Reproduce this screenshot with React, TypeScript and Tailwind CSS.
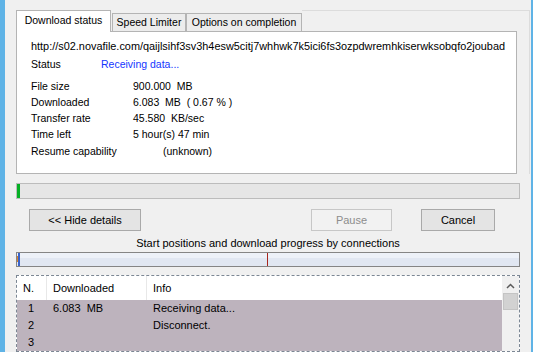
const url =
  'http://s02.novafile.com/qaijlsihf3sv3h4esw5citj7whhwk7k5ici6fs3ozpdwremhkiserwksobqfo2joubad'

const rows = [
  { n: '1', dl: '6.083  MB', info: 'Receiving data...' },
  { n: '2', dl: '', info: 'Disconnect.' },
  { n: '3', dl: '', info: '' },
]

function Btn({ label, w, disabled }: { label: string; w: string; disabled?: boolean }) {
  return (
    <div
      className={`${w} h-[22px] flex items-center justify-center border ${
        disabled ? 'border-[#c7c7c7] bg-[#f2f2f2] text-[#8d8d8d]' : 'border-[#a9a9a9] bg-[#e4e4e4]'
      }`}
    >
      {label}
    </div>
  )
}

export default function App() {
  return (
    <div className="flex w-[533px] h-[352px] overflow-hidden bg-[#f0f0f0] font-['Liberation_Sans',Arial,sans-serif] text-[10.5px] text-black">
      <div className="w-[5px] shrink-0 bg-[#5fb3e6]" />
      <div className="flex-1 pl-[11px] flex flex-col">
        {/* tab control */}
        <div className="mt-[10px] w-[514px] border-r border-[#dcdcdc]">
          <div className="flex h-[21px] items-end">
            <div className="relative z-10 -mb-px h-[22px] w-[95px] bg-white border border-b-0 border-[#b4b4b4] flex items-center justify-center pb-[1px]">
              Download status
            </div>
            <div className="h-[18px] w-[74px] border border-b-0 border-[#b4b4b4] bg-[#ececec] flex items-center justify-center ml-[1px]">
              Speed Limiter
            </div>
            <div className="h-[18px] w-[116px] border border-b-0 border-[#b4b4b4] bg-[#ececec] flex items-center justify-center">
              Options on completion
            </div>
            <div className="flex-1 self-stretch border-t border-[#dcdcdc]" />
          </div>
          <div className="w-[501px] h-[143px] bg-white border border-[#b4b4b4] pl-[14px]">
            <div className="mt-[6px] h-[16px] leading-[16px] w-[479px] overflow-hidden whitespace-nowrap text-[10.9px]">{url}</div>
            <div className="mt-[2px] flex h-[16px] leading-[16px]">
              <span className="w-[70px]">Status</span>
              <span className="text-[#1436ff]">Receiving data...</span>
            </div>
            <div className="mt-[6px] flex h-[16px] leading-[16px]">
              <span className="w-[102px]">File size</span>
              <span className="whitespace-pre">900.000  MB</span>
            </div>
            <div className="flex h-[16px] leading-[16px]">
              <span className="w-[102px]">Downloaded</span>
              <span className="whitespace-pre">6.083  MB  ( 0.67 % )</span>
            </div>
            <div className="flex h-[16px] leading-[16px]">
              <span className="w-[102px]">Transfer rate</span>
              <span className="whitespace-pre">45.580  KB/sec</span>
            </div>
            <div className="flex h-[16px] leading-[16px]">
              <span className="w-[102px]">Time left</span>
              <span>5 hour(s) 47 min</span>
            </div>
            <div className="mt-[1px] flex h-[16px] leading-[16px]">
              <span className="w-[132px]">Resume capability</span>
              <span>(unknown)</span>
            </div>
          </div>
        </div>

        {/* overall progress */}
        <div className="mt-[9px] w-[504px] h-[16px] border border-[#bcbcbc] bg-[#e6e6e6] flex">
          <div className="w-[3px] bg-[#06b025]" />
        </div>

        {/* buttons */}
        <div className="mt-[10px] flex text-[11px]">
          <div className="ml-[13px]">
            <Btn label="<< Hide details" w="w-[112px]" />
          </div>
          <div className="ml-[170px]">
            <Btn label="Pause" w="w-[81px]" disabled />
          </div>
          <div className="ml-[29px]">
            <Btn label="Cancel" w="w-[74px]" />
          </div>
        </div>

        <div className="mt-[5px] h-[14px] leading-[14px] w-[504px] text-center text-[11px]">
          Start positions and download progress by connections
        </div>

        {/* connection map */}
        <div className="relative mt-[2px] w-[504px] h-[15px] border border-[#858585] bg-[#e1e7f2]">
          <div className="absolute left-0 top-0 h-[5px] w-full bg-[#edf1f8]" />
          <div className="absolute left-[1px] top-0 h-full w-[2px] bg-[#3a63c8]" />
          <div className="absolute left-0 top-[3px] h-[6px] w-[1px] bg-[#d9822b]" />
          <div className="absolute left-[250px] top-0 h-full w-[1px] bg-[#a8261d]" />
        </div>

        {/* connections list */}
        <div className="mt-[8px] w-[504px] flex-1 border border-dashed border-[#7c8794] bg-white flex text-[11px]">
          <div className="flex-1 flex flex-col">
            <div className="h-[24px] flex items-center bg-white">
              <div className="w-[30px] h-full pl-[6px] flex items-center border-r border-[#e8e8e8]">N.</div>
              <div className="w-[100px] h-full pl-[6px] flex items-center border-r border-[#e8e8e8]">Downloaded</div>
              <div className="flex-1 h-full pl-[6px] flex items-center">Info</div>
            </div>
            <div className="flex-1 bg-[#bdb3bd]">
              {rows.map((r) => (
                <div key={r.n} className="h-[17px] flex items-center whitespace-pre">
                  <div className="w-[30px] pl-[11px]">{r.n}</div>
                  <div className="w-[100px] pl-[6px]">{r.dl}</div>
                  <div className="flex-1 pl-[6px]">{r.info}</div>
                </div>
              ))}
            </div>
          </div>
          <div className="w-[17px] bg-[#f0f0f0] flex flex-col items-center">
            <svg width="9" height="6" viewBox="0 0 9 6" className="mt-[7px]">
              <path d="M1 5 L4.5 1.5 L8 5" fill="none" stroke="#5a5a5a" strokeWidth="1.5" />
            </svg>
            <div className="mt-[4px] w-[15px] h-[17px] bg-[#d2d2d2] border border-[#c4c4c4]" />
          </div>
        </div>
      </div>
      <div className="w-[2px] shrink-0 bg-[#5fb3e6]" />
    </div>
  )
}
